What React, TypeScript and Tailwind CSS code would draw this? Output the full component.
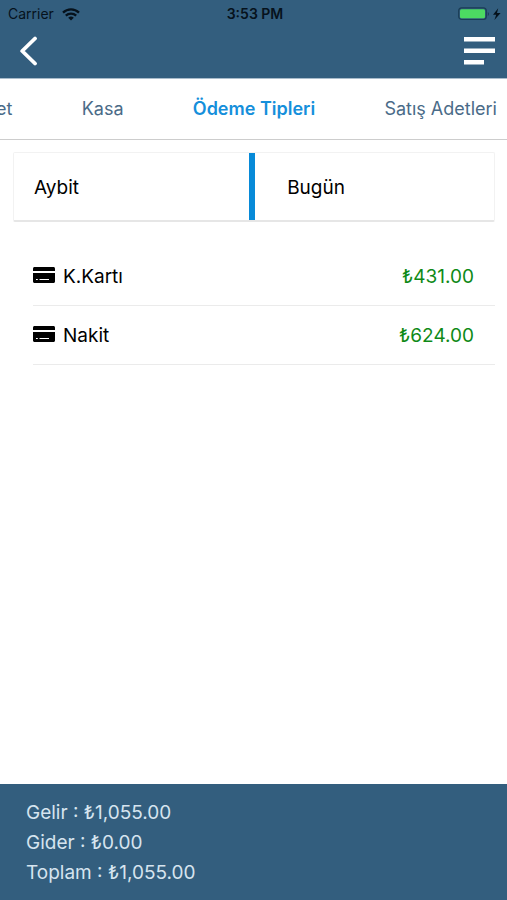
import React, { useState } from 'react'

const tabs = ['et', 'Kasa', 'Ödeme Tipleri', 'Satış Adetleri']

const payments = [
  { name: 'K.Kartı', amount: '₺431.00' },
  { name: 'Nakit', amount: '₺624.00' },
]

const totals = [
  { label: 'Gelir', value: '₺1,055.00' },
  { label: 'Gider', value: '₺0.00' },
  { label: 'Toplam', value: '₺1,055.00' },
]

function WifiIcon() {
  return (
    <svg viewBox="0 0 18 13" className="w-[18px] h-[13px]" fill="none" stroke="#06121c" strokeWidth="2.3" aria-hidden="true">
      <path d="M1 4.6a11.6 11.6 0 0 1 16 0" />
      <path d="M3.8 7.7a7.6 7.6 0 0 1 10.4 0" />
      <path d="M9 12.6 6.2 9.8a4 4 0 0 1 5.6 0z" fill="#06121c" stroke="none" />
    </svg>
  )
}

function BatteryIcon() {
  return (
    <svg viewBox="0 0 44 14" className="w-11 h-3.5" aria-hidden="true">
      <rect x="0.7" y="0.9" width="27.6" height="11.6" rx="3" fill="none" stroke="#1b3d55" strokeWidth="1.2" />
      <rect x="2" y="2.2" width="25" height="9" rx="1.5" fill="#4cdb62" />
      <path d="M29.8 5v4c1.5-.6 1.5-3.4 0-4z" fill="#1b3d55" />
      <path d="M40.2 1.2 35 7.8h3.200l-1.800 5.200 6.200-7h-3.600z" fill="#06121c" />
    </svg>
  )
}

function CardIcon() {
  return (
    <svg viewBox="0 0 22 16" className="w-[22px] h-4 mb-1" aria-hidden="true">
      <path d="M1.500 0h19C21.300 0 22 .7 22 1.500V4H0V1.500C0 .7.7 0 1.500 0z" />
      <path d="M0 6h22v8.500c0 .8-.7 1.500-1.500 1.500h-19C.7 16 0 15.300 0 14.500z" />
      <path d="M3 12.500h1.800M6.500 12.500h9.500" stroke="#fff" strokeWidth="1" />
    </svg>
  )
}

export default function App() {
  const [active, setActive] = useState('Ödeme Tipleri')

  return (
    <div className="flex flex-col min-h-screen overflow-hidden bg-white text-black font-['Inter',sans-serif]">
      <header className="bg-[#335e7e] border-b border-[#a9bccb]">
        <div className="grid grid-cols-3 items-center h-7 pl-2 pr-[5px] text-sm text-[#06121c]">
          <div className="flex items-center gap-2">
            <span>Carrier</span>
            <WifiIcon />
          </div>
          <span className="text-center font-semibold">3:53 PM</span>
          <div className="flex justify-end">
            <BatteryIcon />
          </div>
        </div>
        <div className="flex items-center justify-between h-[50px] pl-5 pr-3 pb-1">
          <button aria-label="Geri">
            <svg viewBox="0 0 18 30" className="w-[18px] h-[30px]" fill="none" stroke="#fff" strokeWidth="3.8" strokeLinecap="round" strokeLinejoin="round">
              <path d="M15 2.500 2.200 15 15 27.500" />
            </svg>
          </button>
          <button aria-label="Menü">
            <svg viewBox="0 0 32 28" className="w-8 h-7" fill="#fff">
              <path d="M1 0h31v4.500H1zM1 11.500h31V16H1zM1 23h20v4.500H1z" />
            </svg>
          </button>
        </div>
      </header>

      <nav className="flex items-center justify-between h-[61px] pr-2.5 -ml-1 border-b border-[#cdcdcd] text-lg whitespace-nowrap">
        {tabs.map((tab) => (
          <button
            key={tab}
            onClick={() => setActive(tab)}
            className={tab === active ? 'font-semibold text-[#158fdb]' : 'text-[#4a6b88]'}
          >
            {tab}
          </button>
        ))}
      </nav>

      <main className="flex-1 pl-[13px] pr-3 pt-3 text-[19px]">
        <div className="flex h-[70px] border border-b-2 border-[#f2f2f2] border-b-[#e6e6e6] rounded-xs">
          <button className="w-[49%] pl-5 pt-1 text-left">Aybit</button>
          <button className="flex-1 pl-8 pt-1 text-left border-l-6 border-[#078ad8]">Bugün</button>
        </div>
        <ul className="mt-[25px] pl-5">
          {payments.map((payment) => (
            <li key={payment.name} className="flex items-center h-[59px] pt-0.5 pr-[21px] border-b border-[#ebebeb]">
              <CardIcon />
              <span className="ml-2">{payment.name}</span>
              <span className="ml-auto text-[#0f8a17]">{payment.amount}</span>
            </li>
          ))}
        </ul>
      </main>

      <footer className="px-[26px] pt-3.5 pb-3 bg-[#335e7e] text-[19px] leading-[30px] text-[#d6e4ef]">
        {totals.map((total) => (
          <p key={total.label}>
            {total.label} : {total.value}
          </p>
        ))}
      </footer>
    </div>
  )
}
